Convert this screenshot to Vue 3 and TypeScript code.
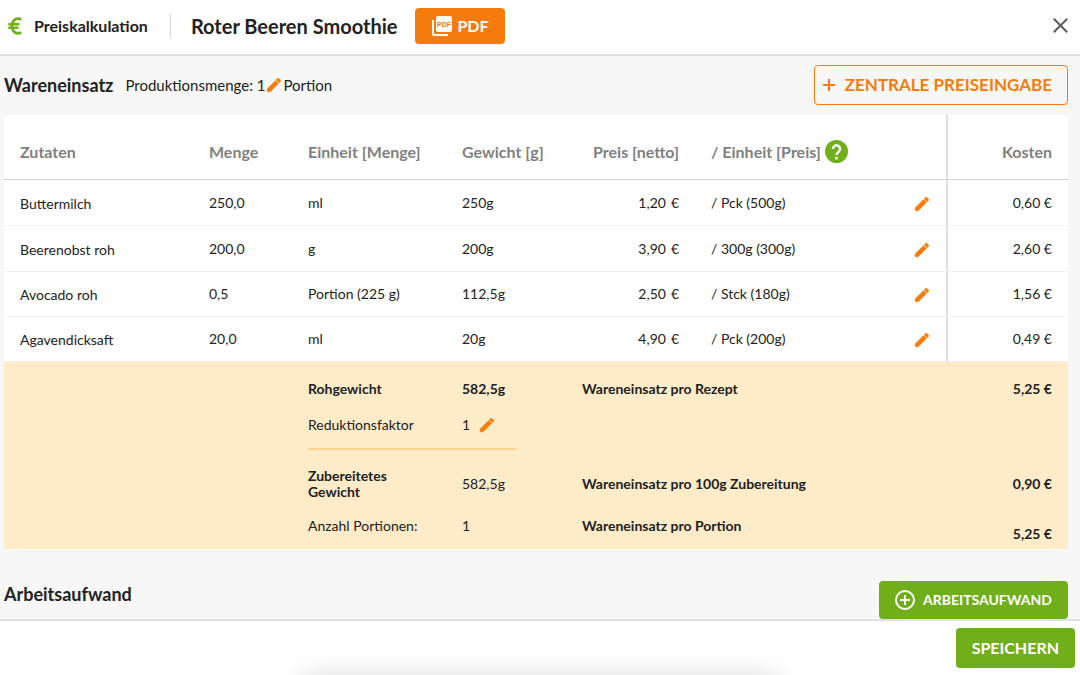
<script setup lang="ts">
import { ref } from 'vue'

interface Ingredient {
  name: string
  amount: string
  unit: string
  weight: string
  price: string
  priceUnit: string
  cost: string
}

const ingredients = ref<Ingredient[]>([
  { name: 'Buttermilch', amount: '250,0', unit: 'ml', weight: '250g', price: '1,20', priceUnit: '/ Pck (500g)', cost: '0,60 €' },
  { name: 'Beerenobst roh', amount: '200,0', unit: 'g', weight: '200g', price: '3,90', priceUnit: '/ 300g (300g)', cost: '2,60 €' },
  { name: 'Avocado roh', amount: '0,5', unit: 'Portion (225 g)', weight: '112,5g', price: '2,50', priceUnit: '/ Stck (180g)', cost: '1,56 €' },
  { name: 'Agavendicksaft', amount: '20,0', unit: 'ml', weight: '20g', price: '4,90', priceUnit: '/ Pck (200g)', cost: '0,49 €' },
])

const pencil =
  'M3 17.25V20c0 .6.4 1 1 1h2.75L17.81 9.94l-3.75-3.75L3 17.25zM20.71 7.04c.39-.39.39-1.02 0-1.41l-2.34-2.34c-.39-.39-1.02-.39-1.41 0l-1.83 1.83 3.75 3.75 1.83-1.83z'
</script>

<template>
  <div class="page">
    <header class="topbar">
      <svg class="euro" viewBox="0 0 14 18" aria-hidden="true">
        <path d="M13.300 2.500C8.500 0 4 3 4 9s4.500 9 9.300 6.500M.3 7.200h11.200M.3 10.800h10.200" />
      </svg>
      <span class="section">Preiskalkulation</span>
      <h1 class="title">Roter Beeren Smoothie</h1>
      <button class="btn pdf" type="button">
        <svg class="pdf-icon" viewBox="0 0 22 22" aria-hidden="true">
          <rect x="5" y="1" width="16" height="16" rx="2" fill="currentColor" />
          <path d="M2 5v13.500q0 1.500 1.500 1.500H17" fill="none" stroke="currentColor" stroke-width="2" />
          <text class="pdf-mark" x="13" y="12" text-anchor="middle">PDF</text>
        </svg>
        PDF
      </button>
      <button class="icon-btn close" type="button" aria-label="Schließen">
        <svg viewBox="0 0 14 14" aria-hidden="true"><path d="M.7.7l12.600 12.600M13.300.7L.7 13.300" /></svg>
      </button>
    </header>

    <main class="content">
      <div class="toolbar">
        <h2>Wareneinsatz</h2>
        <p class="quantity">
          Produktionsmenge: 1
          <button class="icon-btn" type="button" aria-label="Produktionsmenge bearbeiten">
            <svg class="pencil" viewBox="0 0 24 24" aria-hidden="true"><path :d="pencil" /></svg>
          </button>
          Portion
        </p>
        <button class="btn outline" type="button">
          <svg class="plus" viewBox="0 0 12 12" aria-hidden="true"><path d="M6 0v12M0 6h12" /></svg>
          ZENTRALE PREISEINGABE
        </button>
      </div>

      <table class="costs">
        <colgroup>
          <col class="c-name" /><col class="c-amount" /><col class="c-unit" /><col class="c-weight" />
          <col class="c-price" /><col /><col class="c-edit" /><col class="c-cost" />
        </colgroup>
        <thead>
          <tr>
            <th scope="col">Zutaten</th>
            <th scope="col">Menge</th>
            <th scope="col">Einheit [Menge]</th>
            <th scope="col">Gewicht [g]</th>
            <th scope="col" class="right">Preis [netto]</th>
            <th scope="col" colspan="2" class="divided">
              <span class="with-help">
                / Einheit [Preis]
                <button class="icon-btn" type="button" aria-label="Hilfe">
                  <svg class="help" viewBox="0 0 24 24" aria-hidden="true">
                    <circle cx="12" cy="12" r="12" />
                    <path d="M8.300 9.300a3.700 3.700 0 1 1 6.300 2.600C13.200 13.200 12 13.800 12 15.700" />
                    <path d="M12 17.500v2.800" />
                  </svg>
                </button>
              </span>
            </th>
            <th scope="col" class="right">Kosten</th>
          </tr>
        </thead>
        <tbody>
          <tr v-for="item in ingredients" :key="item.name">
            <td class="name">{{ item.name }}</td>
            <td>{{ item.amount }}</td>
            <td>{{ item.unit }}</td>
            <td>{{ item.weight }}</td>
            <td class="right"><span class="price"><span>{{ item.price }}</span><span>€</span></span></td>
            <td>{{ item.priceUnit }}</td>
            <td class="edit divided">
              <button class="icon-btn" type="button" :aria-label="`${item.name} bearbeiten`">
                <svg class="pencil" viewBox="0 0 24 24" aria-hidden="true"><path :d="pencil" /></svg>
              </button>
            </td>
            <td class="right">{{ item.cost }}</td>
          </tr>
        </tbody>
        <tfoot>
          <tr class="sum-first">
            <td colspan="2"></td>
            <th scope="row">Rohgewicht</th>
            <td class="strong">582,5g</td>
            <th scope="row" colspan="3">Wareneinsatz pro Rezept</th>
            <td class="right strong">5,25 €</td>
          </tr>
          <tr class="sum-factor">
            <td colspan="2"></td>
            <td>Reduktionsfaktor</td>
            <td>
              <span class="factor">
                1
                <button class="icon-btn" type="button" aria-label="Reduktionsfaktor bearbeiten">
                  <svg class="pencil" viewBox="0 0 24 24" aria-hidden="true"><path :d="pencil" /></svg>
                </button>
              </span>
            </td>
            <td colspan="4"></td>
          </tr>
          <tr class="sum-rule">
            <td colspan="2"></td>
            <td colspan="2"><hr /></td>
            <td colspan="4"></td>
          </tr>
          <tr class="sum-prepared">
            <td colspan="2"></td>
            <th scope="row">Zubereitetes Gewicht</th>
            <td>582,5g</td>
            <th scope="row" colspan="3">Wareneinsatz pro 100g Zubereitung</th>
            <td class="right strong">0,90 €</td>
          </tr>
          <tr class="sum-last">
            <td colspan="2"></td>
            <td>Anzahl Portionen:</td>
            <td>1</td>
            <th scope="row" colspan="3">Wareneinsatz pro Portion</th>
            <td class="right strong total">5,25 €</td>
          </tr>
        </tfoot>
      </table>

      <div class="labour">
        <h2>Arbeitsaufwand</h2>
        <button class="btn green add" type="button">
          <svg class="plus-circle" viewBox="0 0 20 20" aria-hidden="true">
            <circle cx="10" cy="10" r="9" />
            <path d="M10 5v10M5 10h10" />
          </svg>
          ARBEITSAUFWAND
        </button>
      </div>
    </main>

    <footer class="actions">
      <button class="btn green save" type="button">SPEICHERN</button>
    </footer>
  </div>
</template>

<style>
body {
  margin: 0;
}
</style>

<style scoped>
.page {
  display: flex;
  flex-direction: column;
  min-height: 100vh;
  background: #f7f7f7;
  color: #222;
  font-family: Lato, "Liberation Sans", sans-serif;
  font-size: 14px;
  line-height: 16px;
}

h1,
h2,
p {
  margin: 0;
}

button {
  font: inherit;
  color: inherit;
  cursor: pointer;
}

svg {
  display: block;
}

.icon-btn {
  display: inline-flex;
  padding: 0;
  border: 0;
  background: none;
}

.btn {
  display: inline-flex;
  align-items: center;
  justify-content: center;
  border: 0;
  border-radius: 4px;
  box-sizing: border-box;
  font-weight: 700;
  white-space: nowrap;
}

.topbar {
  display: flex;
  align-items: center;
  flex: none;
  height: 56px;
  padding: 0 12px 2px 8px;
  box-sizing: border-box;
  border-bottom: 2px solid #e0e0e0;
  background: #fff;
}

.euro {
  width: 14px;
  height: 18px;
  margin-right: 12px;
  fill: none;
  stroke: #70af1a;
  stroke-width: 3;
}

.euro path {
  stroke-width: 2.6;
}

.section {
  font-size: 16px;
  font-weight: 700;
}

.title {
  margin-left: 22px;
  padding-left: 20px;
  border-left: 1px solid #d4d4d4;
  font-size: 20px;
  line-height: 24px;
  font-weight: 700;
}

.pdf {
  height: 36px;
  margin-left: 18px;
  padding: 0 16px;
  gap: 4px;
  background: #f57c0c;
  color: #fff;
  font-size: 16px;
}

.pdf-icon {
  width: 22px;
  height: 22px;
}

.pdf-mark {
  fill: #f57c0c;
  font-family: "Liberation Sans", sans-serif;
  font-size: 7px;
  font-weight: 700;
}

.close {
  margin-left: auto;
  padding-bottom: 2px;
}

.close svg {
  width: 15px;
  height: 15px;
  fill: none;
  stroke: #606060;
  stroke-width: 2;
}

.content {
  flex: 1 0 auto;
  padding: 9px 12px 0 4px;
}

.toolbar {
  display: flex;
  align-items: center;
  margin-bottom: 10px;
}

h2 {
  font-size: 18px;
  line-height: 26px;
  font-weight: 700;
}

.quantity {
  display: flex;
  align-items: center;
  margin-left: 12px;
  font-size: 15px;
}

.pencil {
  width: 18px;
  height: 18px;
  fill: #f57c0c;
  stroke: #f57c0c;
  stroke-width: 1;
  stroke-linejoin: round;
}

.outline {
  height: 40px;
  margin-left: auto;
  padding: 0 15px 0 8px;
  gap: 10px;
  border: 1px solid #f57c0c;
  background: none;
  color: #f57c0c;
  font-size: 17px;
}

.plus {
  width: 12px;
  height: 12px;
  fill: none;
  stroke: currentColor;
  stroke-width: 2;
}

.costs {
  width: 100%;
  table-layout: fixed;
  border-collapse: separate;
  border-spacing: 0;
  border-radius: 4px 4px 0 0;
  background: #fff;
}

.c-name {
  width: 189px;
}

.c-amount {
  width: 99px;
}

.c-unit {
  width: 154px;
}

.c-weight {
  width: 120px;
}

.c-price {
  width: 129px;
}

.c-edit {
  width: 50px;
}

.c-cost {
  width: 120px;
}

th,
td {
  padding: 0 16px;
  text-align: left;
}

.right {
  text-align: right;
}

thead th {
  height: 65px;
  padding-top: 9px;
  box-sizing: border-box;
  border-bottom: 1px solid #d4d4d4;
  color: #808080;
  font-size: 16px;
  font-weight: 700;
  white-space: nowrap;
}

.with-help {
  display: inline-flex;
  align-items: center;
  gap: 4px;
}

.help {
  width: 23px;
  height: 23px;
  fill: #70af1a;
}

.help path {
  fill: none;
  stroke: #fff;
  stroke-width: 2.5;
}

tbody td {
  height: 46px;
  box-sizing: border-box;
  border-bottom: 1px solid #f0f0f0;
}

tbody tr:nth-child(n + 3) td {
  height: 45px;
}

tbody .name {
  padding-top: 2px;
}

.divided {
  border-right: 2px solid #e0e0e0;
}

.edit {
  padding: 2px 0 0;
  text-align: center;
}

.edit .icon-btn {
  vertical-align: middle;
}

.price {
  display: inline-flex;
  gap: 5px;
}

tfoot td,
tfoot th {
  background: #feebc8;
}

tfoot th,
.strong {
  font-weight: 700;
}

.sum-first {
  height: 53px;
}

.sum-factor {
  height: 20px;
}

.factor {
  display: inline-flex;
  align-items: center;
  gap: 8px;
}

.sum-rule {
  height: 28px;
}

hr {
  height: 2px;
  margin: 0 33px 0 0;
  border: 0;
  background: #fdd294;
}

.sum-prepared {
  height: 42px;
}

.sum-last {
  height: 44px;
}

.sum-last th,
.sum-last td {
  padding-bottom: 3px;
}

.sum-last .total {
  padding-top: 14px;
  padding-bottom: 0;
}

.labour {
  display: flex;
  align-items: flex-start;
  justify-content: space-between;
  margin-top: 32px;
}

.green {
  background: #70af1a;
  color: #fff;
}

.add {
  height: 38px;
  padding: 0 16px;
  gap: 8px;
}

.plus-circle {
  width: 20px;
  height: 20px;
  fill: none;
  stroke: currentColor;
  stroke-width: 2;
}

.actions {
  position: relative;
  display: flex;
  justify-content: flex-end;
  flex: none;
  height: 56px;
  padding: 7px 5px 0;
  box-sizing: border-box;
  border-top: 2px solid #e0e0e0;
  background: #fff;
  overflow: hidden;
}

.actions::after {
  content: "";
  position: absolute;
  top: 100%;
  left: 28%;
  right: 28%;
  height: 30px;
  box-shadow: 0 3px 30px rgba(0, 0, 0, 0.16);
}

.save {
  height: 40px;
  padding: 0 16px;
  font-size: 16px;
}
</style>
